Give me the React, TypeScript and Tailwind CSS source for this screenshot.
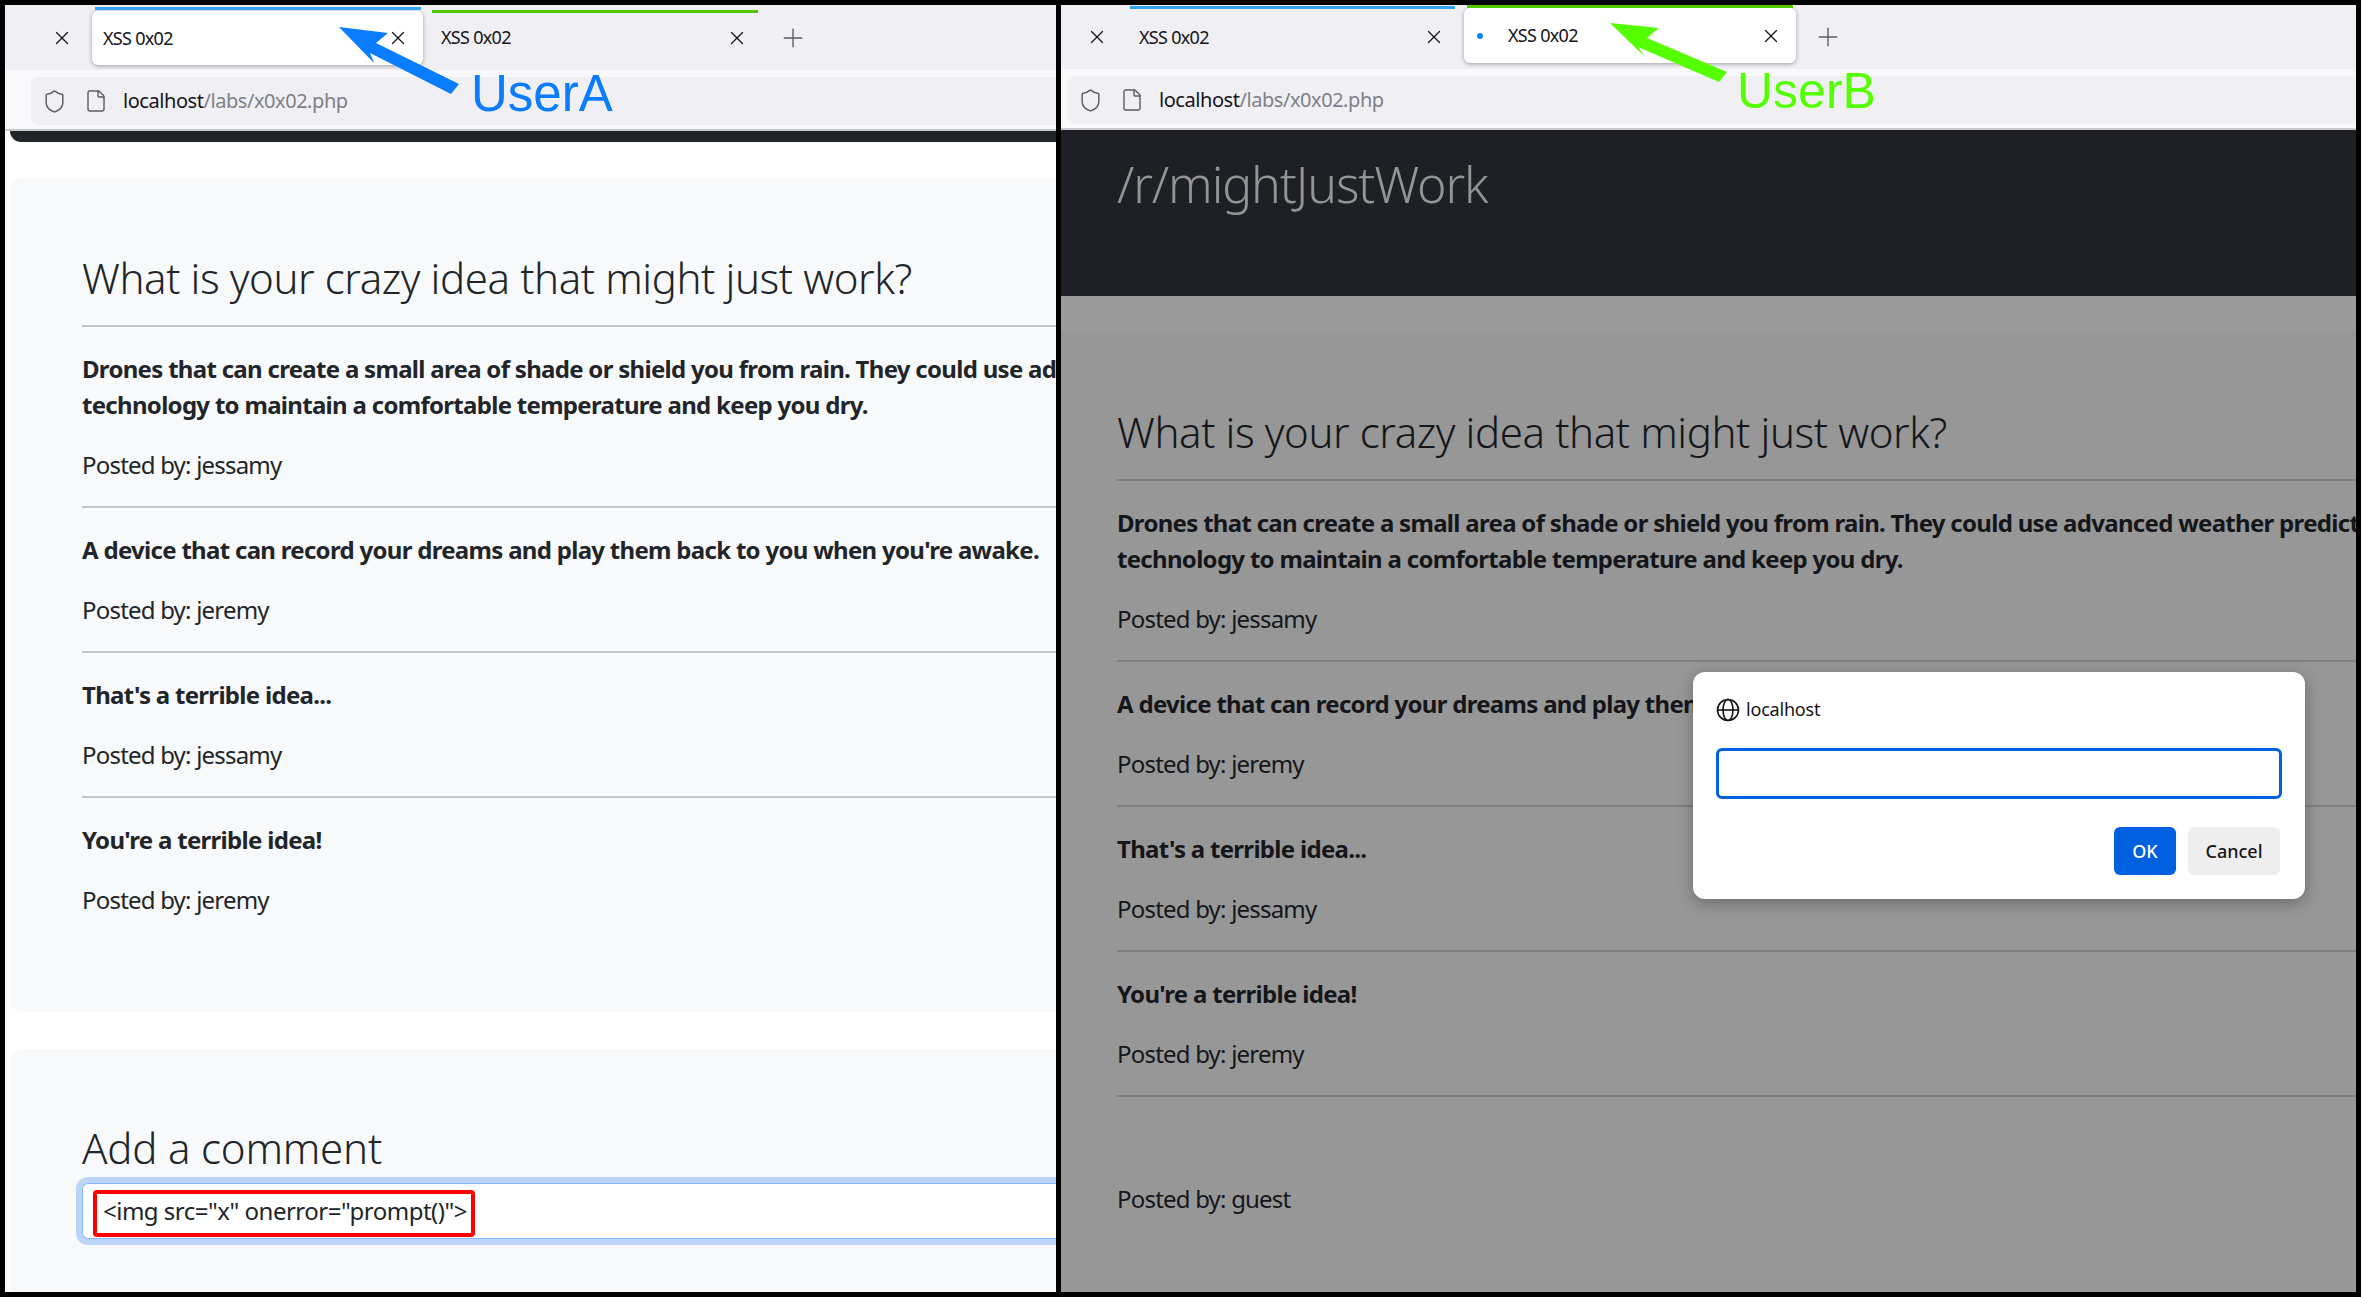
import { File, Plus, Shield, X } from "lucide-react";

const FONT = "font-['Noto_Sans',sans-serif]";

const comments = [
  { body: "Drones that can create a small area of shade or shield you from rain. They could use advanced weather prediction", more: "technology to maintain a comfortable temperature and keep you dry.", by: "jessamy" },
  { body: "A device that can record your dreams and play them back to you when you're awake.", by: "jeremy" },
  { body: "That's a terrible idea...", by: "jessamy" },
  { body: "You're a terrible idea!", by: "jeremy" },
];

function TabClose({ className }: { className: string }) {
  return <X className={`size-[22px] shrink-0 text-[#15141a] ${className}`} strokeWidth={1.4} />;
}

function AddressBar() {
  return (
    <div className="flex h-[48px] items-center rounded-l-lg bg-[#f0f0f4] pl-[11px]">
      <Shield className="size-[25px] text-[#5b5b66]" strokeWidth={1.4} />
      <File className="ml-[17px] size-[24px] text-[#5b5b66]" strokeWidth={1.4} />
      <span className="ml-[15px] text-[20px] leading-none tracking-[-0.45px] text-[#15141a]">
        localhost<span className="text-[#7f7f87]">/labs/x0x02.php</span>
      </span>
    </div>
  );
}

function CommentList({ dimmed }: { dimmed?: boolean }) {
  const rule = dimmed ? "border-[#7f7f80]" : "border-[#c4c5c7]";
  const ink = dimmed ? "text-[#15161a]" : "text-[#212529]";
  return (
    <div>
      <h2 className={`mb-[22px] whitespace-nowrap text-[42px] font-light leading-[50px] tracking-[-0.4px] ${ink}`}>
        What is your crazy idea that might just work?
      </h2>
      {comments.map((c) => (
        <div key={c.body} className={`border-t-2 pt-[24px] pb-[23px] ${rule}`}>
          <p className={`whitespace-nowrap text-[24px] font-bold leading-[36px] tracking-[-0.7px] ${ink}`}>
            {c.body}
            {c.more && <br />}
            {c.more}
          </p>
          <p className={`mt-[24px] text-[24px] leading-[36px] tracking-[-0.8px] ${ink}`}>Posted by: {c.by}</p>
        </div>
      ))}
      {dimmed && (
        <div className={`border-t-2 pt-[84px] ${rule}`}>
          <p className={`text-[24px] leading-[36px] tracking-[-0.8px] ${ink}`}>Posted by: guest</p>
        </div>
      )}
    </div>
  );
}

function UserAPane() {
  return (
    <div className="relative w-[1051px] shrink-0 overflow-hidden bg-white">
      <div className="flex h-[65px] items-center bg-[#f0f0f4]">
        <TabClose className="ml-[46px]" />
        <div className="relative mb-[5px] ml-[19px] flex h-[54px] w-[331px] items-center self-end rounded-md bg-white pl-[11px] shadow-[0_1px_4px_rgba(0,0,0,0.35)]">
          <div className="absolute -top-[4px] left-[3px] right-[2px] h-[3px] bg-[#33a4f5]" />
          <span className="text-[18px] tracking-[-0.7px] text-[#15141a]">XSS 0x02</span>
          <TabClose className="ml-auto mr-[14px]" />
        </div>
        <div className="relative flex h-[54px] w-[335px] items-center pl-[18px]">
          <div className="absolute -top-[1px] left-[9px] right-0 h-[3px] bg-[#51c800]" />
          <span className="text-[18px] tracking-[-0.7px] text-[#15141a]">XSS 0x02</span>
          <TabClose className="ml-auto mr-[10px]" />
        </div>
        <Plus className="ml-[20px] size-[30px] text-[#5b5b66]" strokeWidth={1.1} />
      </div>
      <div className="h-[61px] border-b-2 border-[#c9c9cc] bg-[#f9f9fb] pt-[7px] pl-[26px]">
        <AddressBar />
      </div>
      <div className="ml-[5px] h-[11px] rounded-bl-xl bg-[#212529]" />
      <div className="ml-[5px] mt-[36px] h-[834px] rounded-l-xl bg-[#f8f9fa] pl-[72px] pt-[75px]">
        <CommentList />
      </div>
      <div className="ml-[5px] mt-[37px] h-[243px] rounded-tl-xl bg-[#f8f9fa] pl-[72px] pt-[74px]">
        <h2 className="text-[42px] font-light leading-[50px] tracking-[-0.2px] text-[#212529]">Add a comment</h2>
        <div className="-ml-[6px] mt-[4px] flex h-[68px] items-center rounded-l-xl border-y-[6px] border-l-[6px] border-[#bcd4f8]">
          <div className="flex h-full w-full items-center rounded-l-md border-y border-l border-[#86b7fe] bg-white pl-[20px] text-[24px] tracking-[-0.5px] text-[#212529]">
            &lt;img src="x" onerror="prompt()"&gt;
          </div>
        </div>
      </div>
      <div className="absolute left-[88px] top-[1185px] h-[47px] w-[382px] rounded border-[4px] border-[#ff0000]" />
      <svg className="absolute left-0 top-0" width="700" height="130" viewBox="0 0 700 130">
        <polygon points="334,22 383,28 371,38 454,79 446,89 365,48 369,58" fill="#0a7cff" />
      </svg>
      <span className="absolute left-[466px] top-[60px] font-['Liberation_Sans',sans-serif] text-[51px] leading-[58px] text-[#0a7cff]">UserA</span>
    </div>
  );
}

function UserBPane() {
  return (
    <div className="relative flex min-w-0 flex-1 flex-col overflow-hidden bg-white">
      <div className="flex h-[64px] shrink-0 items-center bg-[#f0f0f4]">
        <TabClose className="ml-[25px]" />
        <div className="relative flex h-[54px] w-[356px] items-center pl-[31px]">
          <div className="absolute -top-[4px] left-[22px] h-[3px] w-[325px] bg-[#33a4f5]" />
          <span className="text-[18px] tracking-[-0.7px] text-[#15141a]">XSS 0x02</span>
          <TabClose className="ml-auto mr-[19px]" />
        </div>
        <div className="relative mb-[6px] flex h-[55px] w-[332px] items-center self-end rounded-md bg-white pl-[13px] shadow-[0_1px_4px_rgba(0,0,0,0.35)]">
          <div className="absolute -top-[3px] left-[3px] right-[3px] h-[3px] bg-[#51c800]" />
          <div className="size-[6px] rounded-full bg-[#0a84ff]" />
          <span className="ml-[25px] text-[18px] tracking-[-0.7px] text-[#15141a]">XSS 0x02</span>
          <TabClose className="ml-auto mr-[14px]" />
        </div>
        <Plus className="ml-[17px] size-[30px] text-[#5b5b66]" strokeWidth={1.1} />
      </div>
      <div className="h-[61px] shrink-0 border-b-2 border-[#c9c9cc] bg-[#f9f9fb] pt-[7px] pl-[6px]">
        <AddressBar />
      </div>
      <div className="h-[166px] shrink-0 bg-[#1f2025] pl-[56px] pt-[22px]">
        <span className="text-[50px] font-light leading-[64px] tracking-[-1.1px] text-[#939497]">/r/mightJustWork</span>
      </div>
      <div className="flex-1 bg-[#9b9b9b] pt-[35px]">
        <div className="h-full bg-[#979798] pl-[56px] pt-[76px]">
          <CommentList dimmed />
        </div>
      </div>
      <div className="absolute left-[632px] top-[667px] flex h-[227px] w-[612px] flex-col rounded-xl bg-white px-[23px] pt-[24px] shadow-[0_4px_16px_rgba(0,0,0,0.3)]">
        <div className="flex items-center gap-[6px] text-[#15141a]">
          <svg width="24" height="24" viewBox="0 0 24 24" fill="none" stroke="currentColor" strokeWidth="1.6">
            <circle cx="12" cy="12" r="10.5" />
            <ellipse cx="12" cy="12" rx="5" ry="10.5" />
            <path d="M1.5 12h21" />
          </svg>
          <span className="text-[18px] tracking-[-0.2px]">localhost</span>
        </div>
        <div className="mt-[25px] h-[51px] rounded-md border-[3px] border-[#0060df] bg-white" />
        <div className="mt-[28px] flex justify-end gap-[12px] pr-[2px]">
          <div className="flex h-[48px] w-[62px] items-center justify-center rounded-md bg-[#0060df] text-[18px] font-medium text-white">OK</div>
          <div className="flex h-[48px] w-[92px] items-center justify-center rounded-md bg-[#eeeeee] text-[18px] font-medium text-[#15141a]">Cancel</div>
        </div>
      </div>
      <svg className="absolute left-0 top-0" width="900" height="130" viewBox="0 0 900 130">
        <polygon points="549,18 598,23 586,33 666,67 658,77 577,42 584,52" fill="#55ff00" />
      </svg>
      <span className="absolute left-[676px] top-[58px] font-['Liberation_Sans',sans-serif] text-[50px] leading-[56px] text-[#55ff00]">UserB</span>
    </div>
  );
}

export default function App() {
  return (
    <div className={`flex h-[1297px] w-[2361px] gap-[5px] overflow-hidden bg-black p-[5px] ${FONT}`}>
      <UserAPane />
      <UserBPane />
    </div>
  );
}
